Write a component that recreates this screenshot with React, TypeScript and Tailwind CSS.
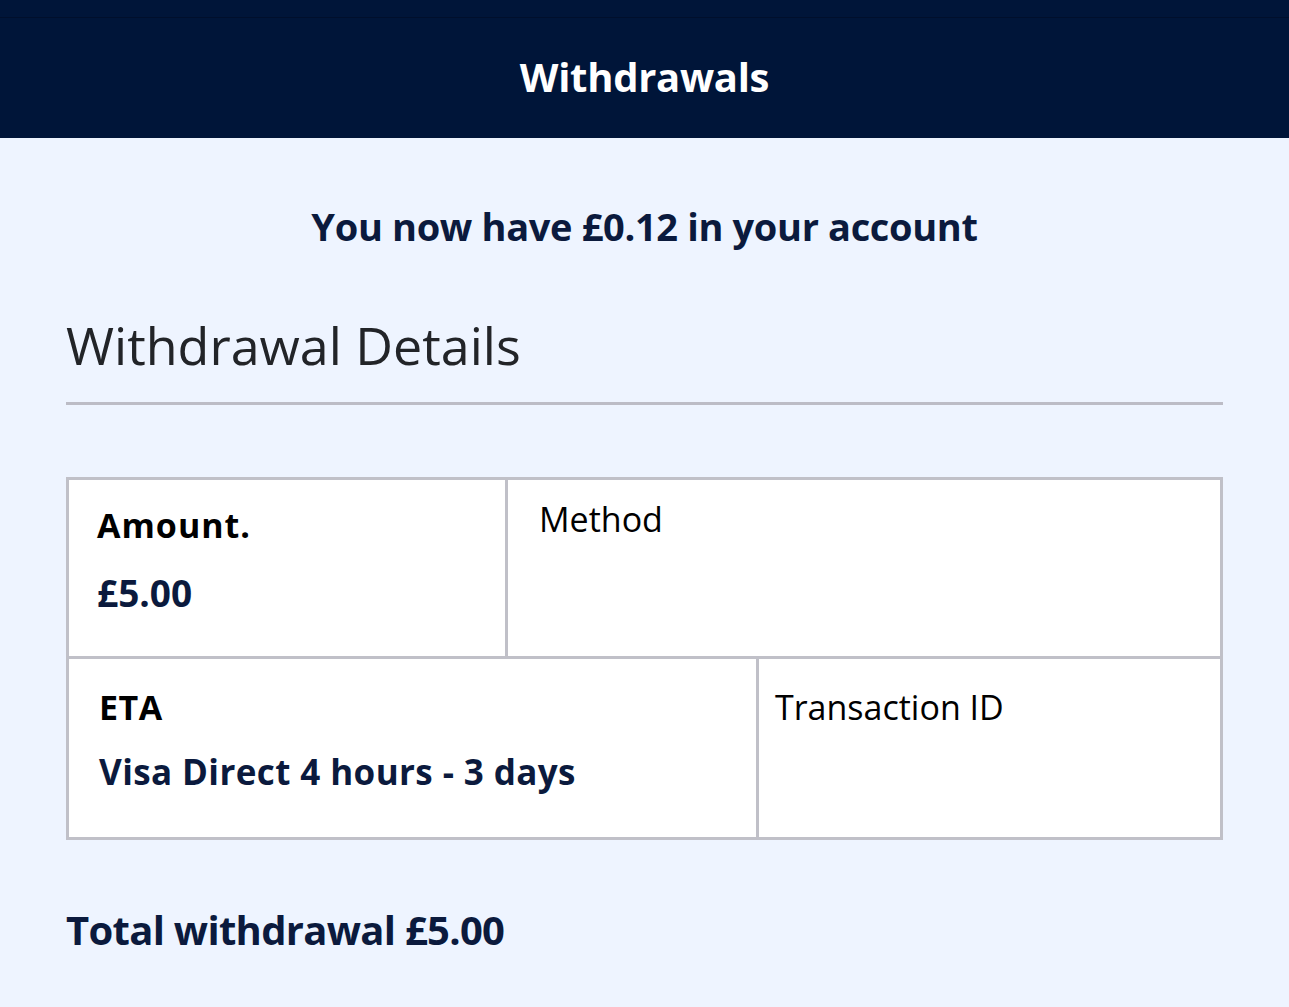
import React from "react";

export default function App() {
  const font = { fontFamily: '"Open Sans", "Noto Sans", sans-serif' };
  return (
    <div className="w-[1289px] h-[1007px] bg-[#eef4ff] overflow-hidden" style={font}>
      <header className="h-[138px] bg-[#001539] flex flex-col">
        <div className="h-[18px] border-b border-[#000f2c]" />
        <div className="flex-1 flex items-center justify-center pb-[2px]">
          <h1 className="text-white text-[40px] font-bold tracking-[-0.3px]">Withdrawals</h1>
        </div>
      </header>
      <div className="pt-[62px] text-center">
        <p className="text-[#0b1a3d] text-[38px] font-bold tracking-[-0.35px] leading-[52px]">
          You now have £0.12 in your account
        </p>
      </div>
      <div className="px-[66px] pt-[63px]">
        <h2 className="text-[#222428] text-[52px] leading-[60px]">Withdrawal Details</h2>
        <div className="mt-[27px] h-[3px] bg-[#bcbcc6] w-[1157px]" />
        <div className="mt-[72px] w-[1157px] border-[3px] border-[#c0c0c8] bg-white">
          <div className="flex h-[179px] border-b-[3px] border-[#c0c0c8]">
            <div className="w-[439px] border-r-[3px] border-[#c0c0c8] pl-[28px] pt-[23px]">
              <div className="text-black text-[34px] font-bold leading-[44px] tracking-[1px]">Amount.</div>
              <div className="mt-[24px] text-[#0b1a3d] text-[37px] font-bold leading-[44px]">£5.00</div>
            </div>
            <div className="flex-1 pl-[31px] pt-[17px]">
              <div className="text-black text-[34px] leading-[44px]">Method</div>
            </div>
          </div>
          <div className="flex h-[178px]">
            <div className="w-[690px] border-r-[3px] border-[#c0c0c8] pl-[30px] pt-[26px]">
              <div className="text-black text-[34px] font-bold leading-[44px] tracking-[0.5px]">ETA</div>
              <div className="mt-[21px] text-[#0b1a3d] text-[35px] font-bold leading-[44px] tracking-[0.4px]">
                Visa Direct 4 hours - 3 days
              </div>
            </div>
            <div className="flex-1 pl-[16px] pt-[26px]">
              <div className="text-black text-[34px] leading-[44px]">Transaction ID</div>
            </div>
          </div>
        </div>
        <p className="mt-[65px] text-[#0b1a3d] text-[40px] font-bold leading-[50px] tracking-[-0.7px]">
          Total withdrawal £5.00
        </p>
      </div>
    </div>
  );
}
